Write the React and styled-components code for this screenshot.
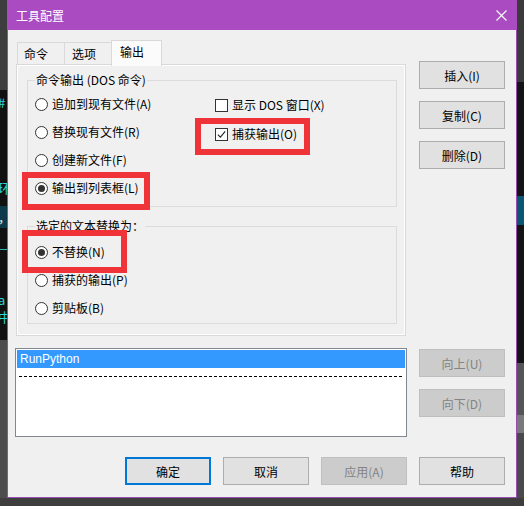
import React from "react";
import styled, { createGlobalStyle, css } from "styled-components";

const GlobalStyle = createGlobalStyle`
  html, body {
    margin: 0;
    padding: 0;
  }
  body {
    width: 524px;
    height: 506px;
    overflow: hidden;
    background: #3c3c3c;
    font-family: "Noto Sans CJK SC", "Microsoft YaHei", sans-serif;
    font-size: 12px;
    color: #000;
  }
`;

const Desktop = styled.div`
  display: flex;
  flex-direction: column;
  width: 524px;
  height: 506px;
  overflow: hidden;
  background: #3c3c3c;
`;

const Screen = styled.div`
  display: flex;
  height: 498px;
`;

const LeftGutter = styled.div`
  width: 7px;
  flex: none;
  overflow: hidden;
  background: linear-gradient(
    to bottom,
    #3d3d3d 0 90px,
    #111 90px 206px,
    #0d3a4a 206px 228px,
    #111 228px 340px,
    #4c4c4c 340px
  );
`;

const CodeGlyph = styled.div`
  margin-top: ${(p) => p.$gap}px;
  margin-left: -2px;
  height: 14px;
  line-height: 14px;
  font-size: 13px;
  color: ${(p) => p.$color || "#2fd6d6"};
  white-space: nowrap;
`;

const RightGutter = styled.div`
  width: 7px;
  flex: none;
  overflow: hidden;
  background: linear-gradient(
    to bottom,
    #3b3b3b 0 82px,
    #141414 82px 196px,
    #0a5774 196px 225px,
    #141414 225px 363px,
    #555 363px 415px,
    #7a7a7a 415px 433px,
    #4a4a4a 433px
  );
`;

const BottomStrip = styled.div`
  height: 8px;
  background: #3e3e3e;
`;

const Window = styled.div`
  width: 510px;
  flex: none;
  display: flex;
  flex-direction: column;
  box-sizing: border-box;
  background: #f0f0f0;
  border: 1px solid #9a4bb2;
  border-top: none;
`;

const TitleBar = styled.div`
  height: 30px;
  flex: none;
  display: flex;
  align-items: center;
  margin: 0 -1px;
  padding-left: 9px;
  background: #aa4bc2;
  color: #fff;
  font-size: 12px;
`;

const CloseBox = styled.div`
  margin-left: auto;
  width: 31px;
  height: 30px;
  display: flex;
  align-items: center;
  justify-content: center;
`;

const Body = styled.div`
  flex: 1;
  display: flex;
  flex-direction: column;
  padding: 10px 11px 0 7px;
`;

const Row = styled.div`
  display: flex;
  gap: 12px;
  margin-top: ${(p) => p.$top || 0}px;
`;

const Main = styled.div`
  width: 392px;
  flex: none;
  display: flex;
  flex-direction: column;
  ${(p) =>
    p.$end &&
    css`
      flex-direction: row;
      justify-content: flex-end;
      gap: 12px;
    `}
`;

const Side = styled.div`
  width: 86px;
  flex: none;
  display: flex;
  flex-direction: column;
  gap: 12px;
  padding-top: ${(p) => p.$offset || 0}px;
`;

const Button = styled.div`
  width: 86px;
  height: 28px;
  box-sizing: border-box;
  display: flex;
  align-items: center;
  justify-content: center;
  background: #e1e1e1;
  border: 1px solid #adadad;
  color: #000;
  font-size: 12px;
  ${(p) =>
    p.$default &&
    css`
      border: 2px solid #0078d7;
    `}
  ${(p) =>
    p.$disabled &&
    css`
      background: #cccccc;
      border-color: #bfbfbf;
      color: #838383;
    `}
`;

const TabControl = styled.div`
  margin: 0 1px;
  display: flex;
  flex-direction: column;
`;

const TabStrip = styled.div`
  height: 24px;
  display: flex;
  align-items: flex-end;
  padding-left: 1px;
`;

const Tab = styled.div`
  position: relative;
  width: ${(p) => p.$w}px;
  height: 22px;
  box-sizing: border-box;
  margin-right: -1px;
  padding-left: ${(p) => p.$pad}px;
  line-height: 21px;
  border: 1px solid #d9d9d9;
  border-bottom: none;
  background: #f0f0f0;
  ${(p) =>
    p.$active &&
    css`
      z-index: 1;
      height: 26px;
      margin-bottom: -2px;
      line-height: 22px;
      background: #fbfbfb;
    `}
`;

const TabPanel = styled.div`
  height: 272px;
  box-sizing: border-box;
  display: flex;
  flex-direction: column;
  gap: 11px;
  padding: 7px 8px 0 10px;
  border: 1px solid #d9d9d9;
  box-shadow: inset 0 0 0 1px #fff;
  background: #f0f0f0;
`;

const GroupBox = styled.fieldset`
  margin: 0;
  min-width: 0;
  padding: ${(p) => p.$pt}px 7px ${(p) => p.$pb}px;
  border: 1px solid #dcdcdc;
  border-radius: 0;

  legend {
    padding: 0 1px;
    line-height: 16px;
    font-size: 12px;
    color: #000;
  }
`;

const Columns = styled.div`
  display: flex;
`;

const OptionColumn = styled.div`
  width: ${(p) => (p.$w ? `${p.$w}px` : "auto")};
  display: flex;
  flex-direction: column;
`;

const OptionRow = styled.div`
  height: 28px;
  display: flex;
  align-items: center;
  transform: translateY(${(p) => p.$shift || 0}px);
`;

const Choice = styled.span`
  position: relative;
  display: inline-flex;
  align-items: center;
  gap: 4px;
  height: 16px;
  line-height: 16px;
  white-space: nowrap;

  ${(p) =>
    p.$mark &&
    css`
      &::after {
        content: "";
        position: absolute;
        top: ${p.$mark[0]}px;
        right: ${p.$mark[1]}px;
        bottom: ${p.$mark[2]}px;
        left: ${p.$mark[3]}px;
        border: 6px solid #ef3338;
        pointer-events: none;
      }
    `}
`;

const RadioDot = styled.span`
  width: 13px;
  height: 13px;
  box-sizing: border-box;
  flex: none;
  border-radius: 50%;
  border: 1px solid #333;
  background: #fff;
  display: flex;
  align-items: center;
  justify-content: center;

  &::before {
    content: "";
    width: 7px;
    height: 7px;
    border-radius: 50%;
    background: ${(p) => (p.$on ? "#333" : "transparent")};
  }
`;

const CheckBox = styled.span`
  width: 13px;
  height: 13px;
  box-sizing: border-box;
  flex: none;
  border: 1px solid #333;
  background: #fff;
  display: flex;
  align-items: center;
  justify-content: center;
`;

const ListBox = styled.div`
  height: 89px;
  box-sizing: border-box;
  padding: 1px;
  border: 1px solid #828790;
  background: #fff;
`;

const ListItem = styled.div`
  height: 18px;
  line-height: 18px;
  padding-left: 3px;
  font-family: "Liberation Sans", "Noto Sans", sans-serif;
  font-size: 12px;
  ${(p) =>
    p.$selected &&
    css`
      background: #3399ff;
      color: #fff;
    `}
`;

const Separator = styled.div`
  height: 17px;
  display: flex;
  align-items: center;
  padding: 0 2px 0 2px;

  &::before {
    content: "";
    flex: 1;
    height: 1px;
    background: repeating-linear-gradient(to right, #000 0 3px, transparent 3px 5px);
  }
`;

const Radio = ({ on, mark, children }) => (
  <Choice $mark={mark}>
    <RadioDot $on={on} />
    {children}
  </Choice>
);

const Check = ({ on, mark, children }) => (
  <Choice $mark={mark}>
    <CheckBox>
      {on && (
        <svg width="9" height="9" viewBox="0 0 9 9">
          <path d="M0.8 4.6 L3.4 7.2 L8.2 1.4" fill="none" stroke="#222" strokeWidth="1.1" />
        </svg>
      )}
    </CheckBox>
    {children}
  </Choice>
);

const codeGlyphs = [
  { gap: 96, ch: "#" },
  { gap: 71, ch: "环" },
  { gap: 15, ch: "，", color: "#e0e0e0" },
  { gap: 17, ch: "—" },
  { gap: 38, ch: "a" },
  { gap: 3, ch: "中" },
];

export default function App() {
  return (
    <Desktop>
      <GlobalStyle />
      <Screen>
        <LeftGutter>
          {codeGlyphs.map((g, i) => (
            <CodeGlyph key={i} $gap={g.gap} $color={g.color}>
              {g.ch}
            </CodeGlyph>
          ))}
        </LeftGutter>

        <Window>
          <TitleBar>
            工具配置
            <CloseBox>
              <svg width="11" height="11" viewBox="0 0 11 11">
                <path d="M0.5 0.5 L10.5 10.5 M10.5 0.5 L0.5 10.5" stroke="#fff" strokeWidth="1.1" />
              </svg>
            </CloseBox>
          </TitleBar>

          <Body>
            <Row>
              <Main>
                <TabControl>
                  <TabStrip>
                    <Tab $w={48} $pad={6}>命令</Tab>
                    <Tab $w={48} $pad={7}>选项</Tab>
                    <Tab $w={51} $pad={8} $active>输出</Tab>
                  </TabStrip>
                  <TabPanel>
                    <GroupBox $pt={2} $pb={4}>
                      <legend>命令输出 (DOS 命令)</legend>
                      <Columns>
                        <OptionColumn $w={180}>
                          <OptionRow>
                            <Radio>追加到现有文件(A)</Radio>
                          </OptionRow>
                          <OptionRow>
                            <Radio>替换现有文件(R)</Radio>
                          </OptionRow>
                          <OptionRow>
                            <Radio>创建新文件(F)</Radio>
                          </OptionRow>
                          <OptionRow>
                            <Radio on mark={[-8, -11, -14, -13]}>
                              输出到列表框(L)
                            </Radio>
                          </OptionRow>
                        </OptionColumn>
                        <OptionColumn>
                          <OptionRow $shift={1}>
                            <Check>显示 DOS 窗口(X)</Check>
                          </OptionRow>
                          <OptionRow $shift={2}>
                            <Check on mark={[-8, -13, -13, -20]}>
                              捕获输出(O)
                            </Check>
                          </OptionRow>
                        </OptionColumn>
                      </Columns>
                    </GroupBox>

                    <GroupBox $pt={4} $pb={1}>
                      <legend>选定的文本替换为：</legend>
                      <OptionColumn>
                        <OptionRow>
                          <Radio on mark={[-14, -22, -13, -13]}>
                            不替换(N)
                          </Radio>
                        </OptionRow>
                        <OptionRow>
                          <Radio>捕获的输出(P)</Radio>
                        </OptionRow>
                        <OptionRow>
                          <Radio>剪贴板(B)</Radio>
                        </OptionRow>
                      </OptionColumn>
                    </GroupBox>
                  </TabPanel>
                </TabControl>
              </Main>
              <Side $offset={21}>
                <Button>插入(I)</Button>
                <Button>复制(C)</Button>
                <Button>删除(D)</Button>
              </Side>
            </Row>

            <Row $top={12}>
              <Main>
                <ListBox>
                  <ListItem $selected>RunPython</ListItem>
                  <Separator />
                </ListBox>
              </Main>
              <Side $offset={1}>
                <Button $disabled>向上(U)</Button>
                <Button $disabled>向下(D)</Button>
              </Side>
            </Row>

            <Row $top={20}>
              <Main $end>
                <Button $default>确定</Button>
                <Button>取消</Button>
                <Button $disabled>应用(A)</Button>
              </Main>
              <Side>
                <Button>帮助</Button>
              </Side>
            </Row>
          </Body>
        </Window>

        <RightGutter />
      </Screen>
      <BottomStrip />
    </Desktop>
  );
}
